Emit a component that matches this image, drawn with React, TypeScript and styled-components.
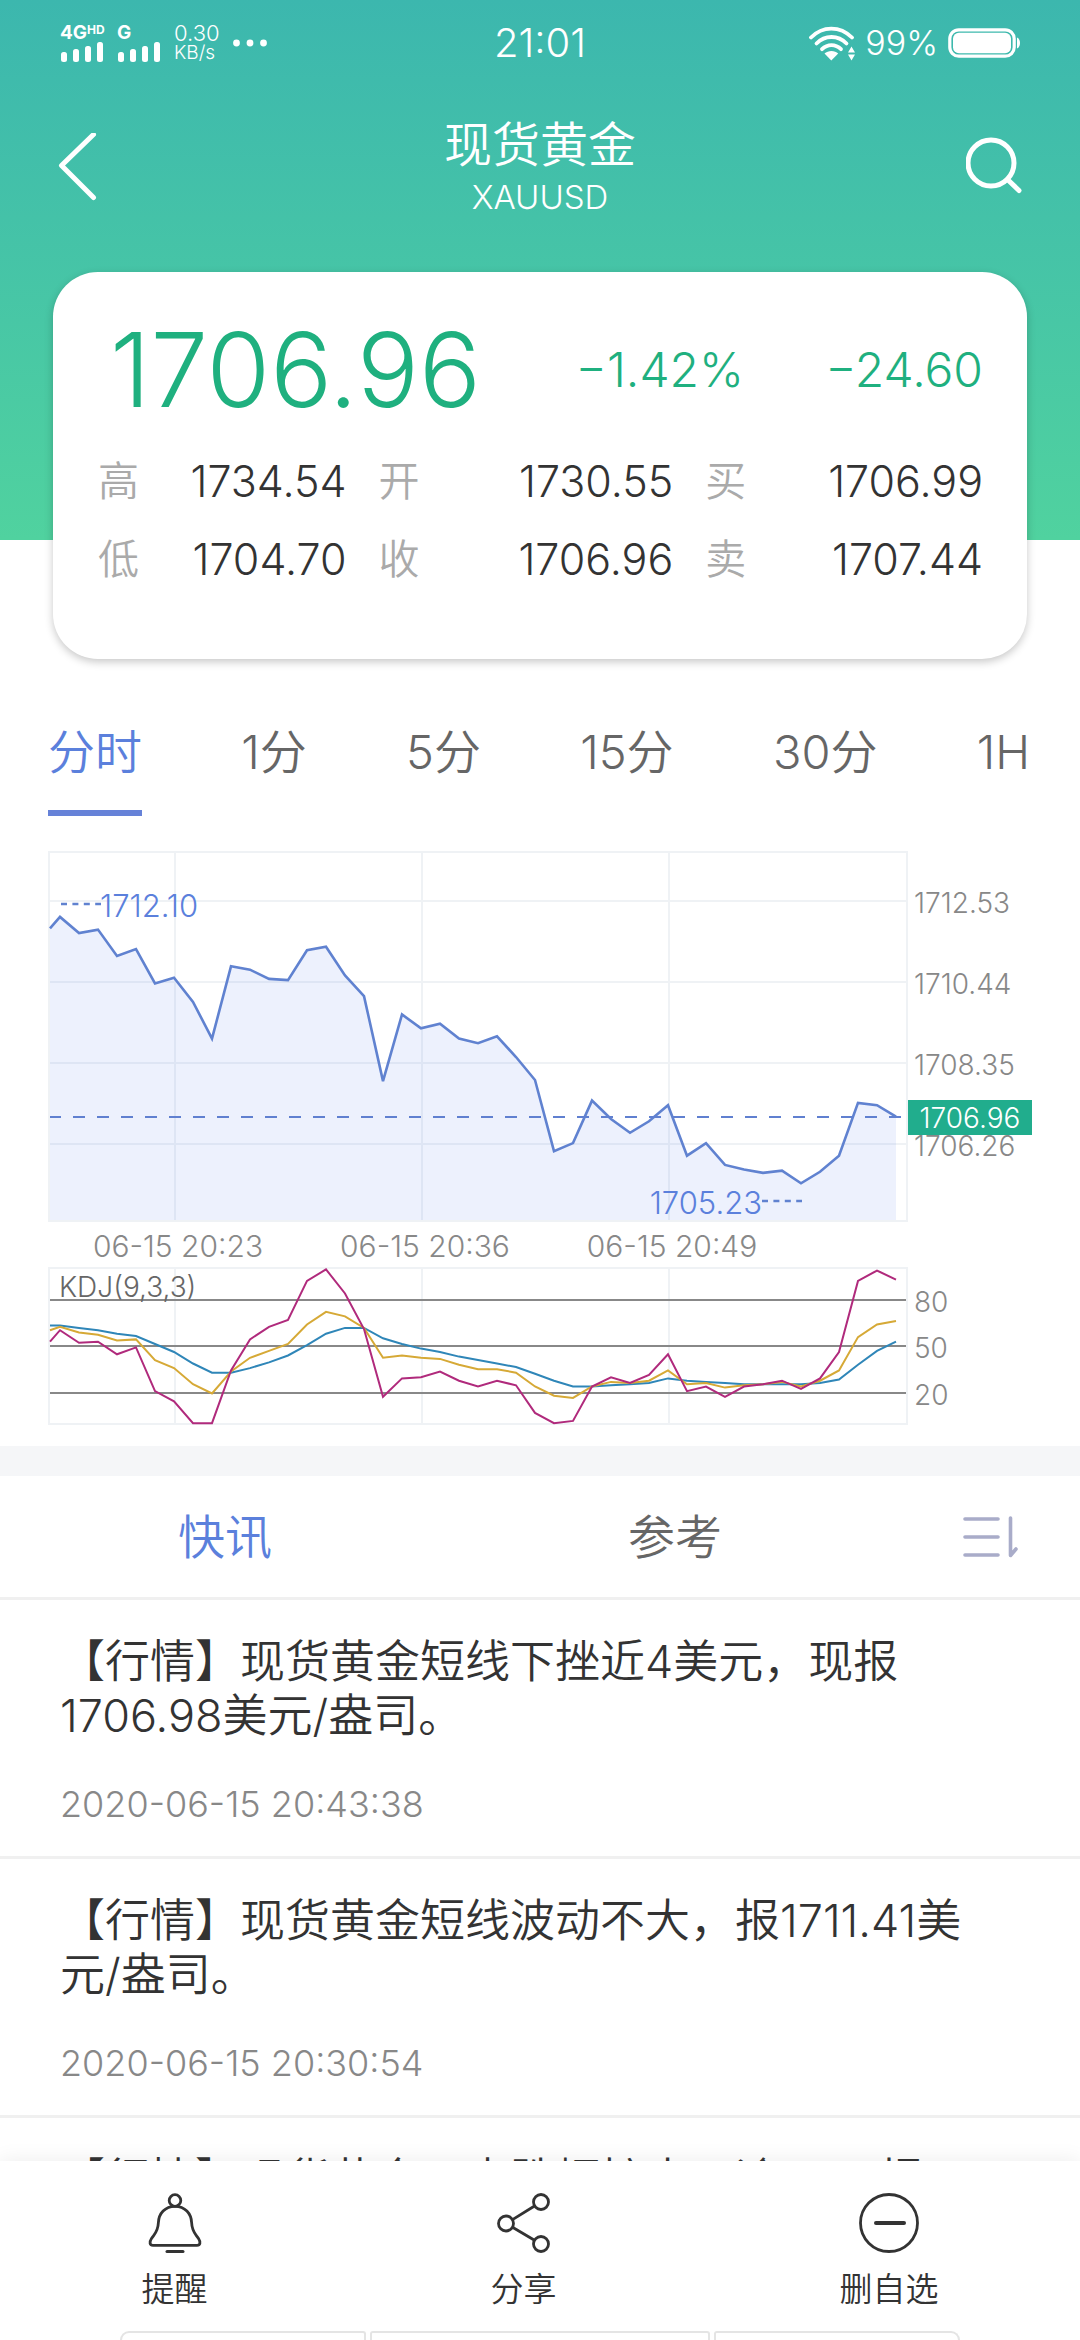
import React, { useState } from "react";
import styled, { createGlobalStyle } from "styled-components";

const GlobalStyle = createGlobalStyle`
  *, *::before, *::after { box-sizing: border-box; }
  body { margin: 0; background: #fff; }
  button { border: 0; padding: 0; margin: 0; background: none; font: inherit; color: inherit; cursor: pointer; }
  h1, h2, p, dl, dt, dd, ul { margin: 0; padding: 0; font-weight: inherit; }
  svg { display: block; flex: none; }
`;

const FONT = 'Inter, "Noto Sans CJK SC", sans-serif';

const Screen = styled.div`
  display: flex;
  flex-direction: column;
  height: 100vh;
  font-family: ${FONT};
  font-weight: 350;
  color: #333;
  background: #fff;
`;

const Scroller = styled.main`
  flex: 1;
  min-height: 0;
  overflow-y: auto;
  scrollbar-width: none;
`;

const Hero = styled.header`
  background: linear-gradient(#3cb7ae, #50d29f) top / 100% 540px no-repeat;
`;

/* ---------- status bar ---------- */

const StatusBar = styled.div`
  display: grid;
  grid-template-columns: 1fr auto 1fr;
  align-items: center;
  height: 86px;
  padding: 0 60px;
  color: #fff;
  font-weight: 400;
`;

const StatusGroup = styled.div<{ $end?: boolean }>`
  display: flex;
  align-items: center;
  justify-content: ${(p) => (p.$end ? "flex-end" : "flex-start")};
  gap: ${(p) => (p.$end ? 10 : 13)}px;
`;

const Signal = styled.div`
  display: flex;
  flex-direction: column;
  width: 44px;
  font-size: 19px;
  font-weight: 700;
  line-height: 18px;
  white-space: nowrap;

  sup {
    font-size: 12px;
    line-height: 12px;
    vertical-align: 5px;
  }
`;

const NetSpeed = styled.div`
  font-size: 22px;
  line-height: 19px;
  font-weight: 300;

  small {
    display: block;
    font-size: 19px;
  }
`;

const Clock = styled.time`
  font-size: 40px;
  line-height: 44px;
  font-weight: 350;
`;

const Percent = styled.span`
  font-size: 34px;
  line-height: 40px;
  font-weight: 350;
`;

/* ---------- title bar ---------- */

const TitleBar = styled.div`
  display: grid;
  grid-template-columns: 1fr auto 1fr;
  align-items: center;
  padding: 29px 58px 53px;
  color: #fff;
`;

const IconButton = styled.button<{ $end?: boolean }>`
  display: flex;
  align-items: center;
  justify-self: ${(p) => (p.$end ? "end" : "start")};
`;

const TitleBlock = styled.div`
  text-align: center;
`;

const Title = styled.h1`
  font-size: 48px;
  line-height: 60px;
`;

const Subtitle = styled.p`
  font-size: 33px;
  line-height: 44px;
  font-weight: 300;
`;

/* ---------- quote card ---------- */

const Card = styled.section`
  margin: 0 53px;
  padding: 38px 44px 61px 45px;
  border-radius: 45px;
  background: #fff;
  box-shadow: 0 3px 8px rgba(0, 0, 0, 0.22);
`;

const PriceRow = styled.div`
  display: flex;
  align-items: center;
  padding-left: 12px;
  margin-bottom: 12px;
  color: #1fb07f;
  font-weight: 300;
`;

const Price = styled.strong`
  flex: 1;
  font-size: 103px;
  line-height: 120px;
  font-weight: inherit;
`;

const Change = styled.span`
  min-width: 239px;
  font-size: 48px;
  line-height: 60px;
  text-align: right;
`;

const Stats = styled.dl`
  display: grid;
  grid-template-columns: 247fr 293fr 276fr;
  column-gap: 32px;
`;

const Stat = styled.div`
  display: flex;
  align-items: center;
  justify-content: space-between;
  line-height: 78px;
`;

const StatLabel = styled.dt`
  font-size: 41px;
  color: #aaa;
`;

const StatValue = styled.dd`
  font-size: 43px;
  font-weight: 300;
`;

/* ---------- period tabs ---------- */

const PeriodTabs = styled.nav`
  display: flex;
  justify-content: space-between;
  padding: 63px 50px 0 48px;
`;

const PeriodTab = styled.button<{ $active: boolean }>`
  padding-bottom: 28px;
  border-bottom: 6px solid ${(p) => (p.$active ? "#6682d8" : "transparent")};
  font-size: 47px;
  line-height: 60px;
  color: ${(p) => (p.$active ? "#5b80dc" : "#666")};
`;

/* ---------- chart ---------- */

const ChartBox = styled.section`
  padding: 34px 48px 20px;
  border-bottom: 30px solid #f5f6f8;

  svg {
    width: 100%;
    height: auto;
    font-family: ${FONT};
    font-size: 28px;
    font-weight: 300;
  }
`;

/* ---------- news ---------- */

const NewsTabs = styled.nav`
  display: grid;
  grid-template-columns: 5fr 5fr 2fr;
  height: 124px;
  border-bottom: 3px solid #f0f0f0;
`;

const NewsTab = styled.button<{ $active?: boolean }>`
  display: flex;
  align-items: center;
  justify-content: center;
  font-size: 47px;
  line-height: 60px;
  color: ${(p) => (p.$active ? "#5b80dc" : "#666")};
`;

const NewsList = styled.ul`
  list-style: none;
`;

const NewsItem = styled.li`
  padding: 35px 60px 30px;
  border-bottom: 3px solid #f0f0f0;
`;

const NewsTitle = styled.h2`
  font-size: 45px;
  line-height: 54px;
`;

const NewsTime = styled.time`
  display: block;
  margin-top: 39px;
  font-size: 36px;
  line-height: 44px;
  font-weight: 300;
  color: #888;
`;

/* ---------- bottom bar ---------- */

const BottomBar = styled.footer`
  position: relative;
  background: #fff;
  box-shadow: 0 0 20px rgba(0, 0, 0, 0.08);
`;

const Actions = styled.div`
  display: flex;
  justify-content: space-around;
  padding-top: 32px;
`;

const Action = styled.button`
  display: flex;
  flex-direction: column;
  align-items: center;
  gap: 14px;
  font-size: 33px;
  line-height: 44px;
`;

const Slots = styled.div`
  display: grid;
  grid-template-columns: 246fr 340fr 246fr;
  gap: 4px;
  padding: 20px 120px 0;
`;

const Slot = styled.div<{ $side?: "left" | "right" }>`
  height: 9px;
  border: 2px solid #e4e4e4;
  border-bottom: 0;
  border-radius: ${(p) => (p.$side === "left" ? "9px 3px" : p.$side === "right" ? "3px 9px" : "3px 3px")} 0 0;
`;

/* ---------- icons ---------- */

const SignalBars = () => (
  <svg width="44" height="20" viewBox="0 0 44 20" fill="currentColor" aria-hidden="true">
    {[10, 13, 16, 20].map((h, i) => (
      <rect key={h} x={1 + i * 12} y={20 - h} width="6" height={h} rx="2.5" />
    ))}
  </svg>
);

const Dots = () => (
  <svg width="34" height="8" viewBox="0 0 34 8" fill="currentColor" aria-hidden="true">
    <circle cx="3.5" cy="4" r="3.4" />
    <circle cx="17" cy="4" r="3.4" />
    <circle cx="30.5" cy="4" r="3.4" />
  </svg>
);

const Wifi = () => (
  <svg width="46" height="35" viewBox="0 0 46 35" fill="none" stroke="currentColor" strokeWidth="3.8" strokeLinecap="round" aria-hidden="true">
    <path d="M2 11.5C13.500 -.4 31 -.4 43 11.5" />
    <path d="M7.5 17.500C16 8.800 29 8.800 37.500 17.500" />
    <path d="M13 23.200C18.500 17.800 26.500 17.800 32 23.200" />
    <path d="M15.500 27.500C19 24 26 24 29.200 27.500L22.300 34.500Z" fill="currentColor" stroke="none" />
    <path d="M42.500 20.500L46 26.500H39ZM42.500 34.500L46 28.500H39Z" fill="currentColor" stroke="none" />
  </svg>
);

const Battery = () => (
  <svg width="72" height="30" viewBox="0 0 72 30" fill="currentColor" aria-hidden="true">
    <rect x="1.8" y="1.8" width="64.400" height="26.400" rx="9" fill="none" stroke="currentColor" strokeWidth="3.2" />
    <rect x="5" y="4.800" width="58" height="20.400" rx="6" />
    <path d="M69 9.500c4 1.500 4 9.500 0 11z" />
  </svg>
);

const Back = () => (
  <svg width="40" height="68" viewBox="0 0 40 68" fill="none" stroke="currentColor" strokeWidth="5" strokeLinecap="round" strokeLinejoin="round" aria-hidden="true">
    <path d="M35.500 1.500L3.500 32.500L35.500 64.500" />
  </svg>
);

const Search = () => (
  <svg width="56" height="60" viewBox="0 0 56 60" fill="none" stroke="currentColor" strokeWidth="5" strokeLinecap="round" aria-hidden="true">
    <circle cx="25" cy="26" r="23" />
    <path d="M41.500 42.500L53 53.500" />
  </svg>
);

const SortList = () => (
  <svg width="56" height="42" viewBox="0 0 56 42" fill="none" stroke="#a9acc9" strokeWidth="3.6" strokeLinecap="round" strokeLinejoin="round" aria-hidden="true">
    <path d="M3 3H36M3 21H36M3 39H36M48.500 2V39.500L54 33" />
  </svg>
);

const Bell = () => (
  <svg width="60" height="60" viewBox="0 0 60 60" fill="none" stroke="currentColor" strokeWidth="2.8" strokeLinecap="round" strokeLinejoin="round" aria-hidden="true">
    <circle cx="30" cy="7.5" r="5.8" />
    <path d="M30 13.300C20 13.300 13.800 20.500 13.400 29.500C13 39 9.500 41 6.500 45.500C4 49.300 4.800 52.300 8 52.300H52C55.200 52.300 56 49.300 53.500 45.500C50.500 41 47 39 46.600 29.500C46.200 20.500 40 13.300 30 13.300Z" />
    <path d="M22 58.500H38" strokeWidth="3" />
  </svg>
);

const Share = () => (
  <svg width="60" height="60" viewBox="0 0 60 60" fill="none" stroke="currentColor" strokeWidth="2.8" aria-hidden="true">
    <circle cx="47" cy="9" r="7.5" />
    <circle cx="12" cy="30.5" r="7.5" />
    <circle cx="47" cy="51" r="7.5" />
    <path d="M18.500 26.600L40.500 13M18.500 34.300L40.500 47.200" />
  </svg>
);

const Remove = () => (
  <svg width="60" height="60" viewBox="0 0 60 60" fill="none" stroke="currentColor" strokeWidth="2.8" strokeLinecap="round" aria-hidden="true">
    <circle cx="30" cy="30" r="28.500" />
    <path d="M17 30H45" strokeWidth="4" />
  </svg>
);

/* ---------- data ---------- */

const STATS = [
  ["高", "1734.54"],
  ["开", "1730.55"],
  ["买", "1706.99"],
  ["低", "1704.70"],
  ["收", "1706.96"],
  ["卖", "1707.44"],
];

const PERIODS = ["分时", "1分", "5分", "15分", "30分", "1H"];

/* Each series starts with the value at the plot's left edge. */
const PRICE_LINE = [
  67, 57, 71, 68, 91, 85, 115, 110, 131, 163, 100, 103, 111, 112, 86, 83, 108, 126, 200, 142, 154, 150, 163, 167,
  161, 179, 199, 261, 254, 217, 233, 245, 235, 221, 265, 254, 273, 277, 280, 278, 289, 279, 265, 219, 221, 231,
];
const J_LINE = [
  427, 417, 428, 427, 438, 432, 470, 479, 498, 498, 452, 425, 414, 408, 374, 364, 385, 416, 475, 459, 458, 453, 461,
  466, 461, 465, 489, 498, 496, 466, 458, 463, 456, 438, 470, 466, 475, 466, 464, 461, 468, 459, 436, 374, 365, 373,
];
const K_LINE = [
  417, 414, 419, 421, 426, 425, 443, 450, 464, 472, 453, 441, 435, 429, 412, 401, 405, 415, 441, 439, 441, 442, 447,
  451, 451, 454, 466, 474, 476, 466, 462, 463, 461, 452, 464, 463, 467, 465, 464, 462, 466, 461, 452, 423, 412, 409,
];
const D_LINE = [
  413, 413, 415, 417, 420, 422, 429, 436, 446, 454, 454, 450, 445, 439, 430, 420, 415, 415, 424, 429, 433, 436, 440,
  443, 446, 449, 455, 461, 466, 466, 465, 464, 463, 459, 461, 462, 463, 464, 464, 464, 464, 463, 460, 447, 435, 427,
];

/* Series units run 0 to 500 over the whole drawing. */
const toY = (v: number) => Math.round((1.148 * v + 1.5) * 10) / 10;
const toPoints = (line: number[]) =>
  line.map((v, i) => `${i === 0 ? 2 : 12 + (i - 1) * 19},${toY(v)}`).join(" ");

const PRICE_TICKS: [string, number][] = [
  ["1712.53", 51],
  ["1710.44", 132],
  ["1708.35", 213],
  ["1706.26", 294],
];
const KDJ_TICKS: [string, number][] = [
  ["80", 450],
  ["50", 496],
  ["20", 543],
];
const TIME_TICKS: [string, number][] = [
  ["06-15 20:23", 127],
  ["06-15 20:36", 374],
  ["06-15 20:49", 621],
];

const NEWS = [
  { title: "【行情】现货黄金短线下挫近4美元，现报1706.98美元/盎司。", time: "2020-06-15 20:43:38" },
  { title: "【行情】现货黄金短线波动不大，报1711.41美元/盎司。", time: "2020-06-15 20:30:54" },
  { title: "【行情】现货黄金日内跌幅扩大，逾1.5%报", time: "" },
];

const ACTIONS = [
  { label: "提醒", Icon: Bell },
  { label: "分享", Icon: Share },
  { label: "删自选", Icon: Remove },
];

const Chart = () => (
  <svg viewBox="0 0 984 576" role="img" aria-label="XAUUSD">
    <g fill="none" stroke="#eff2f5" strokeWidth="2">
      {PRICE_TICKS.map(([t, y]) => (
        <path key={t} d={`M2 ${y}H859`} />
      ))}
      {TIME_TICKS.map(([t, x]) => (
        <path key={t} d={`M${x} 2V371M${x} 418V574`} />
      ))}
      <rect x="1" y="2" width="858" height="369" />
      <rect x="1" y="418" width="858" height="156" />
    </g>
    <polygon points={`${toPoints(PRICE_LINE)} 848,370 2,370`} fill="#5a82f0" fillOpacity="0.11" />
    <polyline points={toPoints(PRICE_LINE)} fill="none" stroke="#6082d0" strokeWidth="2.6" />
    <path d="M2 267H855" stroke="#6080d0" strokeWidth="2" strokeDasharray="12 12" strokeDashoffset="1" />
    <path d="M13 54H53M714 351H754" stroke="#6082d0" strokeWidth="2.4" strokeDasharray="6 5.4" />
    <g stroke="#888" strokeWidth="2">
      {KDJ_TICKS.map(([t, y]) => (
        <path key={t} d={`M2 ${y}H858`} />
      ))}
    </g>
    <g fill="none" strokeWidth="2">
      <polyline points={toPoints(D_LINE)} stroke="#2f86b8" />
      <polyline points={toPoints(K_LINE)} stroke="#d6a936" />
      <polyline points={toPoints(J_LINE)} stroke="#b02a7c" />
    </g>
    <g fill="#5b80dc" fontSize="31">
      <text x="52" y="67">1712.10</text>
      <text x="714" y="364" textAnchor="end">1705.23</text>
    </g>
    <g fill="#888">
      {[...PRICE_TICKS, ...KDJ_TICKS].map(([t, y]) => (
        <text key={t} x="866" y={y + 12}>{t}</text>
      ))}
      {TIME_TICKS.map(([t, x]) => (
        <text key={t} x={x + 3} y="407" textAnchor="middle" fontSize="30">{t}</text>
      ))}
      <text x="11" y="447" fill="#666">KDJ(9,3,3)</text>
    </g>
    <rect x="860" y="250" width="124" height="35" fill="#21ad8d" />
    <text x="922" y="278" fill="#fff" textAnchor="middle">1706.96</text>
  </svg>
);

export default function App() {
  const [period, setPeriod] = useState("分时");

  return (
    <Screen>
      <GlobalStyle />
      <Scroller>
        <Hero>
          <StatusBar>
            <StatusGroup>
              <Signal>
                <span>4G<sup>HD</sup></span>
                <SignalBars />
              </Signal>
              <Signal>
                <span>G</span>
                <SignalBars />
              </Signal>
              <NetSpeed>
                0.30<small>KB/s</small>
              </NetSpeed>
              <Dots />
            </StatusGroup>
            <Clock>21:01</Clock>
            <StatusGroup $end>
              <Wifi />
              <Percent>99%</Percent>
              <Battery />
            </StatusGroup>
          </StatusBar>
          <TitleBar>
            <IconButton aria-label="返回"><Back /></IconButton>
            <TitleBlock>
              <Title>现货黄金</Title>
              <Subtitle>XAUUSD</Subtitle>
            </TitleBlock>
            <IconButton $end aria-label="搜索"><Search /></IconButton>
          </TitleBar>
          <Card>
            <PriceRow>
              <Price>1706.96</Price>
              <Change>−1.42%</Change>
              <Change>−24.60</Change>
            </PriceRow>
            <Stats>
              {STATS.map(([label, value]) => (
                <Stat key={label}>
                  <StatLabel>{label}</StatLabel>
                  <StatValue>{value}</StatValue>
                </Stat>
              ))}
            </Stats>
          </Card>
        </Hero>
        <PeriodTabs>
          {PERIODS.map((p) => (
            <PeriodTab key={p} $active={p === period} onClick={() => setPeriod(p)}>
              {p}
            </PeriodTab>
          ))}
        </PeriodTabs>
        <ChartBox>
          <Chart />
        </ChartBox>
        <NewsTabs>
          <NewsTab $active>快讯</NewsTab>
          <NewsTab>参考</NewsTab>
          <NewsTab aria-label="排序"><SortList /></NewsTab>
        </NewsTabs>
        <NewsList>
          {NEWS.map((n) => (
            <NewsItem key={n.title}>
              <NewsTitle>{n.title}</NewsTitle>
              <NewsTime>{n.time}</NewsTime>
            </NewsItem>
          ))}
        </NewsList>
      </Scroller>
      <BottomBar>
        <Actions>
          {ACTIONS.map(({ label, Icon }) => (
            <Action key={label}>
              <Icon />
              {label}
            </Action>
          ))}
        </Actions>
        <Slots>
          <Slot $side="left" />
          <Slot />
          <Slot $side="right" />
        </Slots>
      </BottomBar>
    </Screen>
  );
}
